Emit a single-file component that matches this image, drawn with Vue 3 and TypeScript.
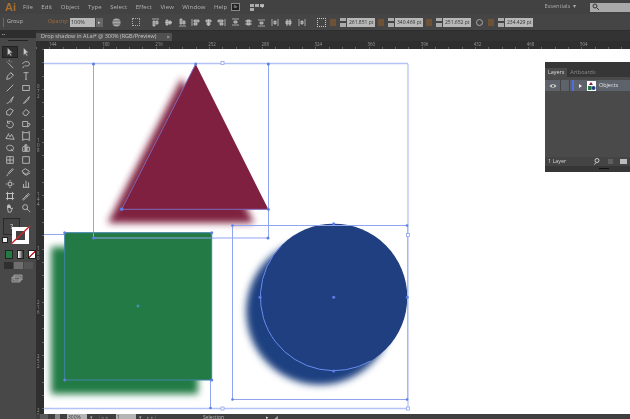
<script setup lang="ts">
const menus: string[] = ['File', 'Edit', 'Object', 'Type', 'Select', 'Effect', 'View', 'Window', 'Help']
const hRuler: string[] = ['144', '180', '216', '252', '288', '324', '360', '396', '432', '468', '504']
const vRuler: string[] = ['072', '108', '144', '180', '216', '252', '288']
const tools: string[] = [
  'M3 1v9l2-2 2 3 1-1-2-3h3z',
  'M3 1v9l2-2 2 3 1-1-2-3h3z',
  'M2 3l1 1M5 1v2M8 3L7 4M4 5l6 6',
  'M2 6c0-3 7-4 8-1s-3 4-5 3M4 8l-2 3',
  'M2 10l1-4 4-4 3 3-4 4zM7 2l3 3',
  'M3 2h6M6 2v8M5 10h2',
  'M2 10L10 2',
  'M2 3h8v6H2z',
  'M2 10c2 0 3-1 4-3l4-5-3 7',
  'M3 10l5-6 2-2-1 3-5 5z',
  'M2 9V5l4-3 4 2-4 6z',
  'M2 7l4-4 4 3-3 4H4z',
  'M3 4a4 4 0 1 1-1 3M3 2v3h3',
  'M2 3h6v6H2zM8 5l3 1-3 4',
  'M1 9l3-5 2 3 2-3 3 6zM4 3h1',
  'M2 2h8v8H2zM1 1h2M9 1h2M1 11h2M9 11h2',
  'M2 5c0-3 7-3 8 0s-2 5-5 4-3-2-3-4zM7 7l3 3',
  'M2 10V5l3-2v7zM5 10V2h2v8zM7 10V5h3v5z',
  'M2 2h8v8H2zM6 2v8M2 6h8',
  'M2 2h8v8H2z',
  'M9 2l1 1-5 5-1-1zM4 8l-2 3',
  'M1 5l4-3 5 3-4 4zM2 7l4 3 5-3',
  'M4 4h4v4H4zM6 1v2M6 9v2M1 6h2M9 6h2',
  'M2 10h8M3 10V6M6 10V2M9 10V4',
  'M3 3h6v6H3zM1 3h10M1 9h10M3 1v10M9 1v10',
  'M2 10l7-7 1 1-7 7zM6 5l2 2',
  'M3 6V3l1 3V2l1 4V2l1 4V3l1 4 2-1-2 5H4z',
  'M5 5m-3 0a3 3 0 1 0 6 0a3 3 0 1 0-6 0M7 7l4 4',
]
const alignIcons: string[] = [
  'M1 1h7M2 3h2v5H2zM5 3h2v3H5z',
  'M1 4.500h7M2 2h2v5H2zM5 3h2v3H5z',
  'M1 8h7M2 1h2v5H2zM5 3h2v3H5z',
  'M1 1v7M3 2h5v2H3zM3 5h3v2H3z',
  'M4.500 1v7M2 2h5v2H2zM3 5h3v2H3z',
  'M8 1v7M1 2h5v2H1zM3 5h3v2H3z',
  'M1 1h7M1 7h7M3 3h3v2H3z',
  'M1 3h7M1 6h7M3 2h3v5H3z',
  'M1 8h7M1 2h7M3 4h3v2H3z',
  'M1 1v7M7 1v7M3 3h2v3H3z',
  'M3 1v7M6 1v7M2 3h5v3H2z',
  'M8 1v7M2 1v7M4 3h2v3H4z',
]
</script>

<template>
  <div class="app">
    <header class="menu">
      <span class="logo">Ai</span>
      <nav class="menu-items">
        <span v-for="m in menus" :key="m">{{ m }}</span>
      </nav>
      <span class="br">Br</span>
      <span class="arrange"><i></i><i></i><i></i><i></i><b>▾</b></span>
      <span class="spring"></span>
      <span class="workspace">Essentials &nbsp;▾</span>
      <span class="search">
        <svg width="8" height="8" viewBox="0 0 8 8"><path d="M5 3a2 2 0 1 1-4 0a2 2 0 1 1 4 0M4.500 4.500L7 7" fill="none" stroke="#333" /></svg>
      </span>
    </header>

    <section class="control">
      <span class="grip"></span>
      <span class="group">Group</span>
      <span class="orange">Opacity:</span>
      <span class="field op">100%</span>
      <span class="stepper">▸</span>
      <svg class="globe" width="9" height="9" viewBox="0 0 9 9"><circle cx="4.500" cy="4.500" r="4" fill="#aaa" /><path d="M1 3h7M1 6h7" stroke="#555" stroke-width=".8" /></svg>
      <span class="ref-point"></span>
      <span class="aligns">
        <svg v-for="a in alignIcons" :key="a" width="9" height="9" viewBox="0 0 9 9">
          <path :d="a" fill="#8a8a8a" stroke="#d0d0d0" stroke-width=".7" />
        </svg>
      </span>
      <span class="ref-point big"></span>
      <span class="transform first">
        <i class="lbl"></i><i class="spin"></i><span class="field val">261.851 pt</span>
      </span>
      <span class="transform">
        <i class="lbl"></i><i class="spin"></i><span class="field val">340.469 pt</span>
      </span>
      <span class="transform">
        <i class="lbl"></i><i class="spin"></i><span class="field val">251.652 pt</span>
      </span>
      <svg class="link" width="9" height="9" viewBox="0 0 9 9"><circle cx="4.500" cy="4.500" r="3" fill="none" stroke="#aaa" /></svg>
      <span class="transform last">
        <i class="lbl"></i><i class="spin"></i><span class="field val">234.429 pt</span>
      </span>
    </section>

    <div class="lower">
      <aside class="tools">
        <div class="dots">••</div>
        <div class="tool-rule"></div>
        <div class="tool-grid">
          <span v-for="(t, i) in tools" :key="i" class="tool" :class="{ active: i === 0 }">
            <svg width="10" height="10" viewBox="0 0 12 12"><path :d="t" :class="{ solid: i === 0 || i === 1 }" /></svg>
          </span>
        </div>
        <div class="colors">
          <span class="fill-box">?</span>
          <span class="stroke-box"></span>
          <svg class="slash" width="22" height="22" viewBox="0 0 22 22"><path d="M1 20L20 2" stroke="#d1252d" stroke-width="1.400" /></svg>
          <span class="defaults"></span>
        </div>
        <div class="mode-row">
          <i class="m-green"></i><i class="m-grad"></i><i class="m-none"></i>
        </div>
        <div class="draw-row"><i></i><i></i><i></i></div>
        <svg class="screen" width="12" height="9" viewBox="0 0 12 9"><path d="M3 1h8v5H3zM1 3h8v5H1z" fill="#666" stroke="#bbb" stroke-width=".7" /></svg>
      </aside>

      <main class="work">
        <div class="tab">
          <span>Drop shadow in AI.ai* @ 300% (RGB/Preview)</span><b>×</b>
        </div>
        <div class="h-ruler">
          <span v-for="r in hRuler" :key="r">{{ r }}</span>
        </div>
        <div class="middle">
          <div class="v-ruler">
            <span v-for="r in vRuler" :key="r">{{ r }}</span>
          </div>
          <div class="canvas">
            <svg class="art" width="586" height="365" viewBox="44 49 586 365">
              <defs>
                <filter id="soft" x="-20%" y="-20%" width="140%" height="140%">
                  <feGaussianBlur stdDeviation="3.500" />
                </filter>
              </defs>
              <path d="M181.700 78 L254 223 L107.700 223 Z" fill="#7f2040" filter="url(#soft)" />
              <rect x="51" y="247" width="147" height="147" fill="#247a45" filter="url(#soft)" />
              <circle cx="319.700" cy="311.300" r="73.500" fill="#1f3f80" filter="url(#soft)" />
              <path d="M195.700 64 L268.300 209.300 L121.700 209.300 Z" fill="#7f2040" />
              <rect x="64.700" y="232.700" width="147" height="147.300" fill="#247a45" />
              <circle cx="333.700" cy="297.300" r="73.600" fill="#1f3f80" />

              <g fill="none" stroke="#8fa6ee" stroke-width="1">
                <rect x="93.500" y="63.500" width="175" height="174.500" />
                <rect x="232.500" y="225.500" width="175" height="174" />
                <path d="M44 234.500H64.500M210.500 380V408" />
                <path d="M44 408.500H408M408 64V408M44 63.500H408" stroke="#b4c3f3" stroke-width="1.300" />
                <path d="M195.700 64 L121.700 209.300 H268.300" stroke="#7d68b8" />
                <rect x="64.700" y="232.700" width="147" height="147.300" stroke="#3e84a8" />
                <path d="M281.700 245.300 A73.600 73.600 0 0 0 370.500 361" stroke="#6a8cf0" />
              </g>
              <g fill="#5f7fe6">
                <circle cx="93.500" cy="64" r="1.500" /><circle cx="195.700" cy="64" r="1.500" /><circle cx="268.300" cy="64" r="1.500" />
                <circle cx="121.700" cy="209.300" r="1.800" /><circle cx="268.300" cy="209.300" r="1.500" />
                <circle cx="93.500" cy="238" r="1.500" /><circle cx="268" cy="238" r="1.500" />
                <circle cx="64.700" cy="232.700" r="1.500" /><circle cx="211.700" cy="232.700" r="1.500" />
                <circle cx="64.700" cy="380" r="1.500" /><circle cx="211.700" cy="380" r="1.500" />
                <circle cx="138" cy="306" r="1.500" fill="#3e94b8" />
                <circle cx="333.700" cy="223.800" r="1.500" /><circle cx="260" cy="297.300" r="1.500" />
                <circle cx="407.300" cy="297.300" r="1.500" /><circle cx="333.700" cy="371" r="1.500" /><circle cx="333.700" cy="297.300" r="1.500" />
                <circle cx="232.500" cy="225.500" r="1.300" /><circle cx="407" cy="225.500" r="1.300" />
                <circle cx="232.500" cy="399.500" r="1.300" /><circle cx="407" cy="399.500" r="1.300" />
                <circle cx="210.500" cy="408" r="1.300" />
              </g>
              <g fill="#fff" stroke="#8fa6ee" stroke-width=".8">
                <rect x="221" y="61.500" width="3" height="3" />
                <rect x="406.500" y="233.500" width="3" height="3" />
                <rect x="221" y="407" width="3" height="3" />
                <rect x="406.500" y="407" width="3" height="3" />
              </g>
            </svg>

            <section class="layers">
              <div class="panel-tabs">
                <span class="on">Layers</span><span class="off">Artboards</span>
              </div>
              <div class="layer-row">
                <svg class="eye" width="8" height="6" viewBox="0 0 8 6"><path d="M.5 3C2 .8 6 .8 7.500 3 6 5.200 2 5.200.5 3z" fill="#c8c8c8" /><circle cx="4" cy="3" r="1" fill="#444" /></svg>
                <i class="cell"></i>
                <i class="tag"></i>
                <i class="arrow"></i>
                <svg class="thumb" width="9" height="10" viewBox="0 0 9 10">
                  <rect width="9" height="10" fill="#fff" />
                  <path d="M4 1l2 3H2z" fill="#7f2040" /><rect x="1" y="5" width="3.500" height="4" fill="#247a45" /><circle cx="6.500" cy="7" r="2" fill="#1f3f80" />
                </svg>
                <span class="lname">Objects</span>
              </div>
              <div class="panel-body"></div>
              <div class="panel-foot">
                <span>1 Layer</span>
                <span class="spring"></span>
                <svg width="7" height="7" viewBox="0 0 7 7"><path d="M5 2.500a2 2 0 1 1-4 0a2 2 0 1 1 4 0M2 4.500L.5 6.500" fill="none" stroke="#ccc" /></svg>
                <i class="dim"></i>
                <i class="pg"></i>
              </div>
              <div class="collapse"></div>
            </section>
          </div>
        </div>
        <footer class="status">
          <span class="st-ic"></span><span class="st-ic light"></span>
          <span class="st-field">300%</span><b>▾</b>
          <span class="st-nav">|◂ ◂</span>
          <span class="st-field">1</span><b>▾</b>
          <span class="st-nav">▸ ▸|</span>
          <span class="st-sel">Selection</span>
          <span class="st-arrow">▸</span>
          <span class="st-mark">◢</span>
        </footer>
      </main>
    </div>
  </div>
</template>

<style>
html, body { margin: 0; background: #3a3a3a; }
</style>

<style scoped>
.app {
  width: 630px; height: 419px; overflow: hidden; display: flex; flex-direction: column;
  background: #333; color: #c8c8c8; font: 6px/1 "Open Sans", "Liberation Sans", sans-serif;
  filter: blur(.35px);
}
i { display: block; }
.spring { flex: 1; }

.menu { height: 14px; display: flex; align-items: center; background: #424242; flex: none; }
.logo { width: 23px; padding-left: 5px; box-sizing: border-box; font: 700 11px/14px "Liberation Sans", sans-serif; color: #a8702f; }
.menu-items { display: flex; gap: 8.400px; font-size: 6px; color: #b4b4b4; width: 208px; letter-spacing: .1px; }
.br { width: 9px; height: 8px; border: 1px solid #888; background: #222; font-size: 4px; line-height: 6px; text-align: center; color: #bbb; box-sizing: border-box; }
.arrange { margin-left: 10px; display: grid; grid-template-columns: 4px 4px 4px; grid-auto-rows: 3px; gap: 1px; position: relative; width: 14px; }
.arrange i { background: #aaa; }
.arrange b { position: absolute; left: 11px; top: 0; font-size: 5px; }
.workspace { font-size: 5.600px; color: #aaa; margin-right: 14px; }
.search { width: 40px; flex: none; height: 9px; background: #a9a9a9; display: flex; align-items: center; padding-left: 2px; box-sizing: border-box; }

.control {
  height: 17px; flex: none; display: flex; align-items: center; background: #454545;
  border-bottom: 1px solid #2d2d2d; box-sizing: border-box;
}
.grip { width: 1px; height: 9px; background: #6a6a6a; margin-left: 3px; flex: none; }
.group { margin-left: 3px; width: 41px; flex: none; color: #bbb; font-size: 5.400px; }
.orange { color: #a86c36; width: 22px; flex: none; font-size: 5.400px; }
.field { background: #b8b8b8; color: #333; display: block; box-sizing: border-box; flex: none; }
.op { width: 25px; height: 9px; line-height: 9px; padding-left: 1px; font-size: 5.400px; }
.stepper { width: 7px; height: 9px; flex: none; line-height: 9px; text-align: center; background: #666; font-size: 5px; margin: 0 9px 0 1px; }
.globe { margin-right: 11px; flex: none; }
.ref-point { width: 8px; height: 8px; flex: none; border: 1px dotted #aaa; box-sizing: border-box; margin-right: 11px; }
.aligns { display: flex; gap: 4.300px; flex: none; }
.ref-point.big { margin: 0 0 0 11px; border-color: #ccc; width: 9px; height: 9px; }
.transform { display: flex; align-items: center; flex: none; margin-left: 3px; }
.transform.first { margin-left: 4px; }
.transform.last { margin-left: 4px; }
.lbl { width: 6px; height: 7px; background: #6e5238; flex: none; }
.spin { width: 6px; height: 9px; background: linear-gradient(#aaa 0 3px, #444 3px 5px, #aaa 5px); margin: 0 1px 0 4px; flex: none; }
.val { width: 28px; height: 9px; line-height: 9px; font-size: 5px; text-align: center; }
.link { margin: 0 0 0 4px; flex: none; }

.lower { flex: 1; min-height: 0; display: flex; }
.tools { width: 36px; flex: none; background: #484848; display: flex; flex-direction: column; align-items: stretch; }
.dots { height: 7px; background: #2e2e2e; color: #ccc; font-size: 4px; line-height: 7px; padding-left: 2px; }
.tool-rule { height: 1px; width: 20px; background: #222; margin: 2px auto 5px; }
.tool-grid { display: grid; grid-template-columns: 16px 16px; grid-auto-rows: 12px; padding-left: 2px; }
.tool { display: flex; align-items: center; justify-content: center; }
.tool.active { background: #2f2f2f; outline: 1px solid #222; outline-offset: -1px; }
.tool svg path { fill: none; stroke: #c4c4c4; stroke-width: 1; }
.tool svg path.solid { fill: #ccc; stroke: #555; stroke-width: .6; }
.colors { position: relative; height: 28px; margin-top: 4px; }
.fill-box { position: absolute; left: 3px; top: 0; width: 17px; height: 17px; background: #444; border: 1px solid #2a2a2a; box-sizing: border-box; text-align: center; font-size: 7px; line-height: 15px; color: #ddd; }
.stroke-box { position: absolute; left: 12px; top: 9px; width: 17px; height: 17px; border: 4px solid #fff; background: #444; box-sizing: border-box; }
.slash { position: absolute; left: 10px; top: 6px; }
.defaults { position: absolute; left: 3px; top: 20px; width: 4px; height: 4px; background: #eee; outline: 1px solid #222; }
.mode-row { display: flex; gap: 4px; padding-left: 5px; margin-top: 4px; }
.mode-row i { width: 6px; height: 7px; border: 1px solid #222; box-sizing: content-box; }
.m-green { background: #247a45; }
.m-grad { background: linear-gradient(90deg, #fff, #333); }
.m-none { background: linear-gradient(135deg, #fff 40%, #d1252d 40% 60%, #fff 60%); }
.draw-row { display: flex; gap: 1px; padding-left: 4px; margin-top: 3px; }
.draw-row i { width: 9px; height: 7px; background: #6e6e6e; }
.draw-row i:first-child { background: #2f2f2f; }
.draw-row i:last-child { background: #555; }
.screen { margin: 5px 0 0 11px; }

.work { flex: 1; min-width: 0; display: flex; flex-direction: column; background: #333; }
.tab { height: 8px; margin-top: 2px; flex: none; padding: 0 2px 0 5px; box-sizing: border-box; display: flex; align-items: center; justify-content: space-between; width: 136px; background: #505050; color: #c6c6c6; font-size: 5.500px; white-space: nowrap; }
.tab b { font-weight: 400; font-size: 6px; }
.h-ruler {
  height: 8px; flex: none; display: flex; padding-left: 13px; color: #9a9a9a; font-size: 4.400px; line-height: 6px;
  background: repeating-linear-gradient(90deg, #666 0 1px, transparent 1px 13.300px) 0 100% / 100% 2px no-repeat, #2f2f2f;
}
.h-ruler span { width: 53.100px; flex: none; }
.middle { flex: 1; min-height: 0; display: flex; }
.v-ruler {
  width: 8px; flex: none; display: flex; flex-direction: column; padding-top: 35px; box-sizing: border-box; color: #9a9a9a; font-size: 4.400px; overflow: hidden;
  background: repeating-linear-gradient(180deg, #666 0 1px, transparent 1px 13.300px) 100% 0 / 2px 100% no-repeat, #2f2f2f;
}
.v-ruler span { height: 54px; flex: none; width: 4px; line-height: 5px; word-break: break-all; margin-left: 1px; }
.canvas { flex: 1; min-width: 0; background: #fff; position: relative; overflow: hidden; }
.art { display: block; }

.layers { position: absolute; left: 501px; top: 13px; width: 85px; height: 110px; background: #4a4a4a; display: flex; flex-direction: column; }
.panel-tabs { height: 15px; flex: none; display: flex; align-items: flex-end; background: #363636; font-size: 5.400px; }
.panel-tabs span { height: 9px; line-height: 9px; padding: 0 3px; }
.on { background: #4a4a4a; color: #ddd; }
.off { color: #8a8a8a; }
.layer-row { height: 11px; margin-top: 3px; display: flex; align-items: center; background: #5d626b; flex: none; }
.eye { margin: 0 3px 0 4px; }
.cell { width: 8px; height: 11px; border-left: 1px solid #444; border-right: 1px solid #444; }
.tag { width: 2px; height: 11px; background: #4e6fe0; margin-left: 2px; }
.arrow { width: 0; height: 0; border-left: 3px solid #eee; border-top: 2.500px solid transparent; border-bottom: 2.500px solid transparent; margin: 0 5px 0 5px; }
.thumb { margin-right: 3px; }
.lname { color: #e2e2e2; font-size: 5.400px; }
.panel-body { flex: 1; }
.panel-foot { height: 9px; flex: none; display: flex; align-items: center; gap: 7px; padding: 0 3px; background: #444; color: #d0d0d0; font-size: 5.400px; }
.dim { width: 5px; height: 5px; background: #5e5e5e; }
.pg { width: 7px; height: 5px; background: #bbb; }
.collapse { height: 6px; flex: none; position: relative; background: #363636; }
.collapse::after { content: ""; position: absolute; left: 54px; top: 2px; width: 10px; height: 1px; background: #111; }

.status { height: 5px; flex: none; display: flex; align-items: flex-start; background: #3f3f3f; color: #aaa; font-size: 5px; line-height: 6px; overflow: hidden; }
.status b { font-weight: 400; margin: 0 5px 0 3px; width: 3px; }
.st-ic { width: 8px; height: 5px; background: #5a5a5a; margin: 0 7px 0 4px; flex: none; }
.st-ic.light { background: #888; margin: 0 7px 0 0; width: 5px; }
.st-field { width: 20px; background: #b5b5b5; color: #333; padding-left: 1px; box-sizing: border-box; height: 5px; flex: none; }
.st-nav { width: 18px; color: #777; flex: none; }
.st-sel { margin-left: 38px; width: 63px; color: #bbb; flex: none; }
.st-arrow { width: 8px; color: #ddd; }
</style>
